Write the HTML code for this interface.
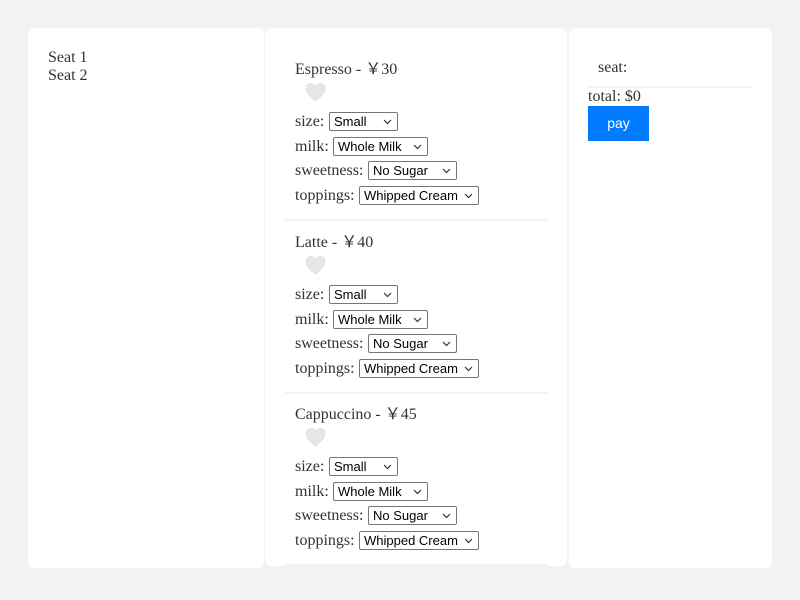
<!DOCTYPE html>
<html><head><meta charset="utf-8"><style>
body{margin:0;width:800px;height:600px;background:#f2f2f2;position:relative;overflow:hidden;font-family:"Liberation Serif",serif;font-size:16px;color:#333}
.p{position:absolute;background:#fff;border-radius:6px}
.t{position:absolute;white-space:nowrap;line-height:18px}
.s{position:absolute;height:17px;border:1px solid #767676;border-radius:2px;font:13px "Liberation Sans",sans-serif;color:#000;line-height:17px;padding-left:4px;box-sizing:content-box;background:#fff}
.s svg{position:absolute;right:5px;top:6px}
.hr{position:absolute;left:285px;width:263px;height:2px;background:#f4f4f4}
</style></head><body>
<div class="p" style="left:28px;top:28px;width:236px;height:540px"></div>
<div class="p" style="left:265px;top:28px;width:302px;height:538px"></div>
<div class="p" style="left:569px;top:28px;width:203px;height:540px"></div>
<div class="t" style="left:48px;top:49px">Seat 1</div>
<div class="t" style="left:48px;top:67px">Seat 2</div>
<div class="t" style="left:598px;top:59px">seat:</div>
<div style="position:absolute;left:588px;top:86px;width:164px;height:2px;background:#f4f4f4"></div>
<div class="t" style="left:588px;top:88px">total: $0</div>
<div style="position:absolute;left:588px;top:106px;width:61px;height:35px;background:#007bff;color:#fff;font:14px 'Liberation Sans',sans-serif;line-height:35px;text-align:center">pay</div>
<div id="items"></div>
<script>
var items=[["Espresso","30"],["Latte","40"],["Cappuccino","45"]],h="";
function sel(x,y,w,txt){return '<div class="s" style="left:'+x+'px;top:'+y+'px;width:'+(w-6)+'px">'+txt+'<svg width="9" height="6"><path d="M1 1l3.5 3.5L8 1" fill="none" stroke="#333" stroke-width="1.2"/></svg></div>';}
items.forEach(function(it,i){var o=i*172.5;
h+='<div class="t" style="left:295px;top:'+(61+o)+'px">'+it[0]+' - ￥'+it[1]+'</div>';
h+='<svg style="position:absolute;left:305px;top:'+(82+o)+'px" width="21" height="20"><path d="M10.5 19C4 14 1 10.5 1 6.5a4.8 4.8 0 0 1 9.5-1.2 4.8 4.8 0 0 1 9.5 1.2c0 4-3 7.5-9.5 12.5z" fill="#e6e6e6" stroke="#d8d8d8" stroke-width="0.6"/></svg>';
h+='<div class="t" style="left:295px;top:'+(113+o)+'px">size:</div>'+sel(329,112+o,69,'Small');
h+='<div class="t" style="left:295px;top:'+(138+o)+'px">milk:</div>'+sel(333,137+o,95,'Whole Milk');
h+='<div class="t" style="left:295px;top:'+(162+o)+'px">sweetness:</div>'+sel(368,161+o,89,'No Sugar');
h+='<div class="t" style="left:295px;top:'+(187+o)+'px">toppings:</div>'+sel(359,186+o,120,'Whipped Cream');
h+='<div class="hr" style="top:'+(219+o)+'px"></div>';});
document.getElementById('items').innerHTML=h;
</script>
</body></html>
